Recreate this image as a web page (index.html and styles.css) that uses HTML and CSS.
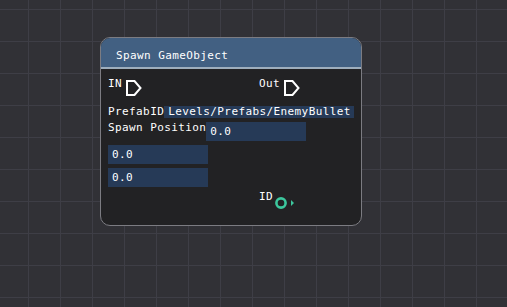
FILE: index.html
```html
<!DOCTYPE html>
<html lang="en">
<head>
  <meta charset="UTF-8" />
  <title>Node Editor</title>
  <link rel="stylesheet" href="styles.css">
</head>
<body>
  <div class="canvas">
    <div class="node">
      <div class="node-title">Spawn GameObject</div>
      <div class="node-body">
        <div class="pins">
          <div class="pin">
            <span>IN</span>
            <svg class="flow" viewBox="0 0 16 16" width="16" height="16">
              <path d="M1 1 H8.5 L14.5 8 L8.5 15 H1 Z" />
            </svg>
          </div>
          <div class="pin">
            <span>Out</span>
            <svg class="flow" viewBox="0 0 16 16" width="16" height="16">
              <path d="M1 1 H8.5 L14.5 8 L8.5 15 H1 Z" />
            </svg>
          </div>
        </div>
        <div class="field">
          <span class="label">PrefabID</span>
          <span class="input input-text">Levels/Prefabs/EnemyBullet</span>
        </div>
        <div class="field field-spawn">
          <span class="label">Spawn Position</span>
          <span class="input">0.0</span>
        </div>
        <div class="input input-row">0.0</div>
        <div class="input input-row">0.0</div>
        <div class="out-row">
          <span>ID</span>
          <svg class="data-pin" viewBox="0 0 20 14" width="20" height="14">
            <circle cx="6" cy="7" r="4.6" />
            <polygon points="16,4 19,7 16,10" />
          </svg>
        </div>
      </div>
    </div>
  </div>
</body>
</html>
```

FILE: styles.css
```css
:root {
  --canvas-bg: #313136;
  --grid-line: #3e3e46;
  --node-bg: #222224;
  --node-border: #7c7c82;
  --header-bg: #426082;
  --frame-bg: #263a57;
  --pin-green: #3cc79d;
}
* { box-sizing:border-box; margin:0; padding:0; }
body {
  background:var(--canvas-bg);
  font-family:"DejaVu Sans Mono", "Liberation Mono", monospace;
  font-size:11px; line-height:12px;
  letter-spacing:0.4px;
  color:#ffffff;
}
.canvas {
  position:relative;
  width:507px; height:307px;
  overflow:hidden;
  background-color:var(--canvas-bg);
  background-image:
    linear-gradient(to right, var(--grid-line) 1px, transparent 1px),
    linear-gradient(to bottom, var(--grid-line) 1px, transparent 1px);
  background-size:32px 32px;
  background-position:28px 9px;
}
.node {
  position:absolute; left:100px; top:37px;
  width:262px; height:189px;
  background:var(--node-bg);
  border:1px solid var(--node-border);
  border-radius:10px;
}
.node-title {
  height:31px;
  padding:12px 0 0 15px;
  background:var(--header-bg);
  border-radius:9px 9px 0 0;
  border-bottom:2px solid #9eaebd;
}
.node-body {
  display:flex; flex-direction:column;
  align-items:flex-start;
  padding:11px 0 0 7px;
}
.pins {
  display:flex; justify-content:space-between;
  width:192px; height:16px;
}
.pin { display:flex; align-items:flex-start; gap:4px; }
.pin span { margin-top:-2px; }
.flow path { fill:none; stroke:#ffffff; stroke-width:2; stroke-linejoin:miter; }
.field { display:flex; align-items:flex-start; margin-top:10px; }
.field-spawn { margin-top:4px; }
.input {
  display:block;
  background:var(--frame-bg);
  width:100px; height:19px;
  line-height:19px;
  padding-left:4px;
}
.input-text {
  width:190px; height:12px;
  line-height:12px;
  padding-left:4px;
}
.input-row { margin-top:4px; }
.out-row {
  display:flex; align-items:flex-start;
  margin:4px 0 0 151px;
  gap:2px;
}
.data-pin { margin-top:5px; }
.data-pin circle { fill:none; stroke:var(--pin-green); stroke-width:2.6; }
.data-pin polygon { fill:var(--pin-green); }
```
